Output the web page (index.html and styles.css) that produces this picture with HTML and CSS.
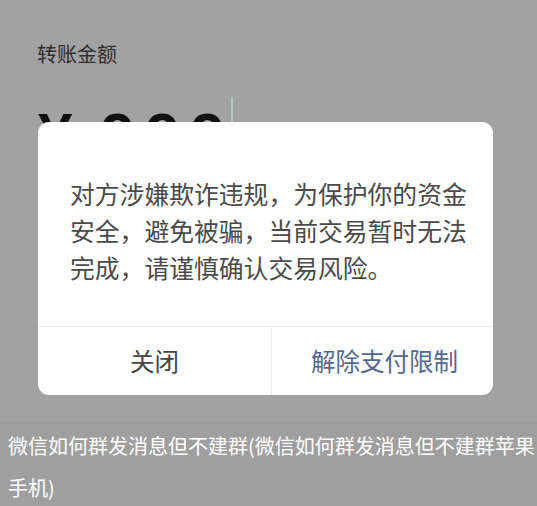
FILE: index.html
```html
<!DOCTYPE html>
<html lang="zh-CN">
<head>
<meta charset="utf-8">
<title>转账</title>
<link rel="stylesheet" href="styles.css">
</head>
<body>
<div class="screen">
  <div class="label">转账金额</div>
  <div class="amount"><span class="yen">¥</span><span class="digits">999</span><span class="cursor"></span></div>
  <div class="modal">
    <div class="msg">对方涉嫌欺诈违规，为保护你的资金安全，避免被骗，当前交易暂时无法完成，请谨慎确认交易风险。</div>
    <div class="actions">
      <div class="btn btn-close">关闭</div>
      <div class="btn btn-primary">解除支付限制</div>
    </div>
  </div>
</div>
<p class="caption">微信如何群发消息但不建群(微信如何群发消息但不建群苹果手机)</p>
</body>
</html>
```

FILE: styles.css
```css
html, body {
  margin: 0;
  padding: 0;
}
body {
  background: #9f9f9f;
  font-family: "Noto Sans CJK SC", "Noto Sans", sans-serif;
  width: 537px;
  height: 506px;
  overflow: hidden;
}
.screen {
  position: relative;
  height: 422px;
  background: #a2a2a2;
  padding: 40px 0 0 37px;
  box-sizing: border-box;
}
.label {
  font-size: 20px;
  line-height: 28px;
  color: #2f2f2f;
}
.amount {
  margin-top: 36px;
  display: flex;
  align-items: flex-start;
  height: 80px;
  font-family: "Liberation Sans", Arial, sans-serif;
  font-weight: bold;
  color: #111;
  font-size: 62px;
  line-height: 62px;
}
.yen {
  margin-left: 1px;
  margin-right: 28px;
}
.digits {
  letter-spacing: 10.5px;
}
.cursor {
  flex: none;
  width: 2px;
  height: 36px;
  background: #b3c4b9;
  margin-top: -7px;
  margin-left: -4px;
}
.modal {
  position: absolute;
  left: 38px;
  top: 122px;
  width: 455px;
  height: 273px;
  background: #fff;
  border-radius: 11px;
  display: flex;
  flex-direction: column;
  overflow: hidden;
}
.msg {
  flex: 1;
  padding: 53px 20px 0 32px;
  font-size: 24.8px;
  line-height: 37px;
  color: #4a4a4a;
}
.actions {
  display: flex;
  height: 68px;
  border-top: 1px solid #ececec;
}
.btn {
  display: flex;
  align-items: center;
  justify-content: center;
  font-size: 24.5px;
  padding-bottom: 2px;
}
.btn-close {
  width: 233px;
  color: #444;
  border-right: 1px solid #ececec;
}
.btn-primary {
  flex: 1;
  color: #52688f;
  padding-left: 4px;
}
.caption {
  margin: 0;
  padding: 3px 0 0 8px;
  font-size: 20px;
  line-height: 42px;
  color: #fff;
}
```
